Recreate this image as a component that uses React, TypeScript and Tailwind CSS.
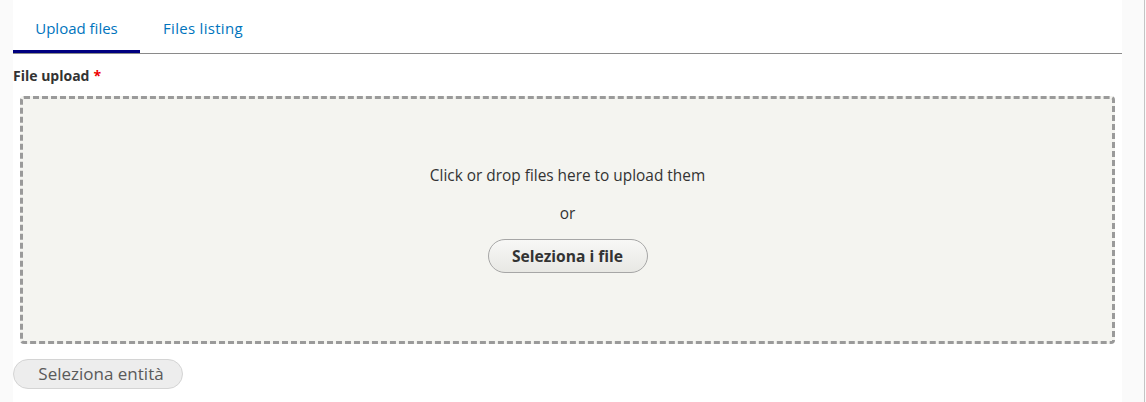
const font = { fontFamily: '"Open Sans", "Liberation Sans", sans-serif' }

export default function App() {
  return (
    <div className="flex h-[402px] w-[1146px] bg-white text-[#333]" style={font}>
      <div className="w-[13px] shrink-0 bg-[#fafafa]" />
      <div className="flex w-[1109px] shrink-0 flex-col bg-white">
        <div className="flex h-[54px] border-b border-[#8a8a8a]">
          <div className="flex h-full w-[127px] items-center justify-center border-b-[3px] border-[#00007f] pt-[6px] text-[15px] text-[#0074bd]">
            Upload files
          </div>
          <div className="flex h-full items-center px-[23px] pt-[4px] text-[15px] tracking-[0.3px] text-[#0074bd]">
            Files listing
          </div>
        </div>
        <div className="mt-[11px] flex items-center text-[14px] font-bold text-[#333]">
          File upload <span className="ml-[4px] text-[#e00]">*</span>
        </div>
        <div className="ml-[7px] mt-[10px] flex h-[248px] w-[1095px] flex-col items-center rounded-[4px] border-[3px] border-dashed border-[#9a9a9a] bg-[#f4f4f0]">
          <div className="mt-[65px] text-[15.4px] text-[#333]">Click or drop files here to upload them</div>
          <div className="mt-[15px] text-[15.4px] text-[#333]">or</div>
          <button className="mt-[14px] h-[34px] w-[160px] rounded-full border border-[#a6a6a6] bg-gradient-to-b from-[#f8f8f6] to-[#e8e8e4] text-[15.6px] font-bold text-[#333]">
            Seleziona i file
          </button>
        </div>
        <div className="mt-[15px]">
          <button className="h-[30px] w-[170px] rounded-full border border-[#d4d4d4] bg-[#ededed] pl-[6px] text-[17px] text-[#5a5a5a]">
            Seleziona entità
          </button>
        </div>
      </div>
      <div className="w-[22px] shrink-0 bg-[#fafafa]" />
      <div className="w-[1px] shrink-0 bg-[#c4c4c4]" />
      <div className="w-[1px] shrink-0 bg-[#fafafa]" />
    </div>
  )
}
